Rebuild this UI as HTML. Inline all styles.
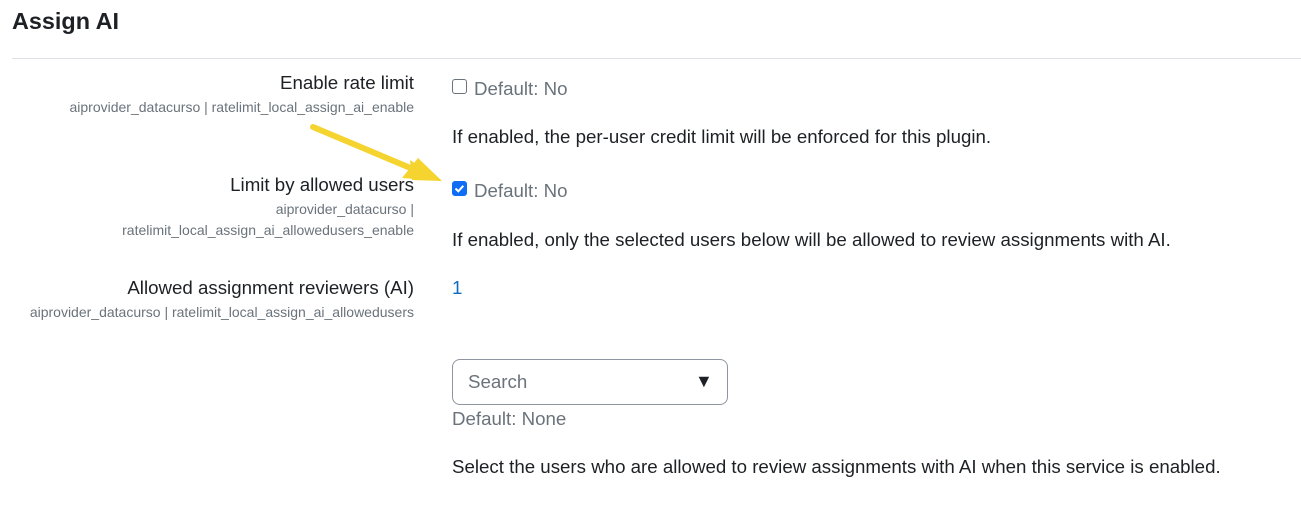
<!DOCTYPE html>
<html><head><style>
body{margin:0;width:1301px;height:505px;background:#fff;font-family:"Liberation Sans",sans-serif;color:#1d2125;position:relative;overflow:hidden}
.a{position:absolute;white-space:nowrap}
.r{right:887px;text-align:right}
.lbl{font-size:18.7px}
.sm{font-size:14px;color:#6a737b;line-height:21px}
.txt{font-size:18.7px}
.g{color:#6a737b}
.cb{position:absolute;border:1px solid #6a737b;border-radius:3px;box-sizing:border-box}
</style></head><body>
<div class="a" style="left:12px;top:8px;font-size:23.4px;font-weight:bold">Assign AI</div>
<div class="a" style="left:12px;top:58px;width:1289px;height:1px;background:#dee2e6"></div>

<div class="a r lbl" style="top:72px">Enable rate limit</div>
<div class="a r sm" style="top:97px">aiprovider_datacurso | ratelimit_local_assign_ai_enable</div>
<div class="cb" style="left:452px;top:79px;width:15px;height:15px"></div>
<div class="a txt g" style="left:474px;top:78px">Default: No</div>
<div class="a txt" style="left:452px;top:126px">If enabled, the per-user credit limit will be enforced for this plugin.</div>

<div class="a r lbl" style="top:174px">Limit by allowed users</div>
<div class="a r sm" style="top:199px">aiprovider_datacurso |<br>ratelimit_local_assign_ai_allowedusers_enable</div>
<div class="cb" style="left:452px;top:181px;width:15px;height:15px;background:#0f6cf5;border-color:#0f6cf5"><svg width="15" height="15" viewBox="0 0 15 15" style="position:absolute;left:-1px;top:-1px"><path d="M3.5 7.5l2.8 2.8 5-5.5" stroke="#fff" stroke-width="2" fill="none"/></svg></div>
<div class="a txt g" style="left:474px;top:180px">Default: No</div>
<div class="a txt" style="left:452px;top:229px">If enabled, only the selected users below will be allowed to review assignments with AI.</div>

<div class="a r lbl" style="top:277px">Allowed assignment reviewers (AI)</div>
<div class="a r sm" style="top:302px">aiprovider_datacurso | ratelimit_local_assign_ai_allowedusers</div>
<div class="a txt" style="left:452px;top:277px;color:#0f6cbf">1</div>

<div class="a" style="left:452px;top:359px;width:276px;height:46px;box-sizing:border-box;border:1px solid #8f959e;border-radius:8px"></div>
<div class="a txt g" style="left:468px;top:371px">Search</div>
<div class="a" style="left:695px;top:371px;font-size:18px">▼</div>
<div class="a txt g" style="left:452px;top:408px">Default: None</div>
<div class="a txt" style="left:452px;top:456px">Select the users who are allowed to review assignments with AI when this service is enabled.</div>

<svg class="a" style="left:0;top:0" width="1301" height="505"><line x1="313" y1="127" x2="420" y2="172" stroke="#f5d430" stroke-width="6" stroke-linecap="round"/><polygon points="442,181 410,160 412,180" fill="#f5d430"/><polygon points="442,181 402,178 418,158" fill="#f5d430"/></svg>
</body></html>
